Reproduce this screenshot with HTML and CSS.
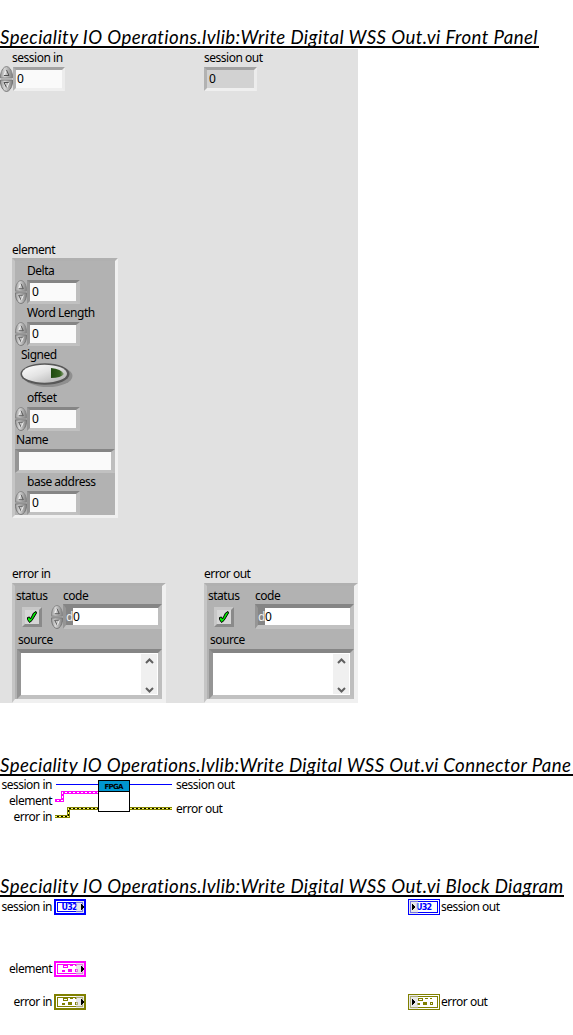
FILE: index.html
```html
<!DOCTYPE html>
<html lang="en">
<head>
<meta charset="utf-8">
<title>Write Digital WSS Out.vi</title>
<link rel="stylesheet" href="styles.css">
</head>
<body>
<svg class="defs" width="0" height="0">
  <defs>
    <linearGradient id="metal" x1="0" x2="1" y1="0" y2="0"><stop offset="0" stop-color="#999"/><stop offset=".35" stop-color="#d6d6d6"/><stop offset="1" stop-color="#808080"/></linearGradient>
    <linearGradient id="pill" x1="0" x2="1" y1="0" y2="1"><stop offset="0" stop-color="#fff"/><stop offset=".45" stop-color="#e4e4e4"/><stop offset="1" stop-color="#aaa"/></linearGradient>
    <linearGradient id="led" x1="0" x2="1" y1="0" y2="0"><stop offset="0" stop-color="#1f4a10"/><stop offset=".7" stop-color="#35611f"/><stop offset="1" stop-color="#91a783"/></linearGradient>
    <symbol id="spinner" viewBox="0 0 13 26">
      <path d="M.5 12V9Q2 1 6.500.5 11 1 12.500 9v3z" fill="url(#metal)" stroke="#858585"/>
      <path d="M.5 14v3Q2 25 6.500 25.500 11 25 12.500 17v-3z" fill="url(#metal)" stroke="#757575"/>
      <path d="M4 9l2.500-5" fill="none" stroke="#f4f4f4"/><path d="M6.500 4L9 9.500H4" fill="none" stroke="#505050"/>
      <path d="M9 16.500H4l2.500 5" fill="none" stroke="#505050"/><path d="M7 21.500l2-5" stroke="#f4f4f4"/>
    </symbol>
    <symbol id="check" viewBox="0 0 14 14">
      <path d="M2.500 7.500l2-.5 1 2L8.500 3 11 1.500 11.500 3 7 10.500 4.500 12.500 2.500 9.500z" fill="#00f000" stroke="#000"/>
    </symbol>
    <symbol id="cluster" viewBox="0 0 18 8">
      <g fill="none" stroke="currentColor"><path d="M2.500 .5h4v2h-4zM9 .5h3M14 .5h2M14.500 4.500h2v2h-2z"/></g>
      <path d="M1 5h3v2H1zM7 4h4v3H7z" fill="currentColor"/>
    </symbol>
  </defs>
</svg>

<h1 class="title title-panel">Speciality IO Operations.lvlib:Write Digital WSS Out.vi Front Panel</h1>
<section class="panel">
  <div class="row row-session">
    <div class="side">
      <div class="label">session in</div>
      <div class="numeric flush"><svg class="spinner"><use href="#spinner"/></svg><div class="field">0</div></div>
    </div>
    <div>
      <div class="label flat">session out</div>
      <div class="field readonly">0</div>
    </div>
  </div>

  <div class="element">
    <div class="caption">element</div>
    <div class="cluster">
      <div class="item"><div class="label">Delta</div><div class="numeric"><svg class="spinner"><use href="#spinner"/></svg><div class="field">0</div></div></div>
      <div class="item"><div class="label">Word Length</div><div class="numeric"><svg class="spinner"><use href="#spinner"/></svg><div class="field">0</div></div></div>
      <div class="item switch-item">
        <div class="label switch-label">Signed</div>
        <svg class="switch" width="54" height="26" viewBox="0 0 54 26">
          <ellipse cx="28" cy="14" rx="24.500" ry="11" fill="#8f8f8f"/>
          <ellipse cx="25" cy="12" rx="24.500" ry="10.800" fill="#585858"/>
          <ellipse cx="24.500" cy="11.700" rx="22.500" ry="9" fill="url(#pill)"/>
          <path d="M31 6q10 1 13 6-3 4-13 4z" fill="url(#led)"/>
        </svg>
      </div>
      <div class="item"><div class="label">offset</div><div class="numeric"><svg class="spinner"><use href="#spinner"/></svg><div class="field">0</div></div></div>
      <div class="item"><div class="label name-label">Name</div><div class="field name-field"></div></div>
      <div class="item"><div class="label">base address</div><div class="numeric"><svg class="spinner"><use href="#spinner"/></svg><div class="field">0</div></div></div>
    </div>
  </div>

  <div class="row row-errors">
    <div class="error">
      <div class="caption">error in</div>
      <div class="cluster error-cluster">
        <div class="error-labels"><span class="status-label">status</span><span>code</span></div>
        <div class="error-values">
          <div class="status"><svg width="14" height="14"><use href="#check"/></svg></div>
          <svg class="spinner"><use href="#spinner"/></svg>
          <div class="field code"><span class="radix">d</span><span>0</span></div>
        </div>
        <div class="source-label">source</div>
        <div class="field source"><div class="scroll">
          <svg width="9" height="6" viewBox="0 0 9 6"><path d="M1 5l3.500-3.500L8 5" class="chevron"/></svg>
          <svg width="9" height="6" viewBox="0 0 9 6"><path d="M1 1l3.500 3.500L8 1" class="chevron"/></svg>
        </div></div>
      </div>
    </div>
    <div class="error">
      <div class="caption">error out</div>
      <div class="cluster error-cluster">
        <div class="error-labels"><span class="status-label">status</span><span>code</span></div>
        <div class="error-values">
          <div class="status"><svg width="14" height="14"><use href="#check"/></svg></div>
          <div class="field code indicator"><span class="radix">d</span><span>0</span></div>
        </div>
        <div class="source-label">source</div>
        <div class="field source"><div class="scroll">
          <svg width="9" height="6" viewBox="0 0 9 6"><path d="M1 5l3.500-3.500L8 5" class="chevron"/></svg>
          <svg width="9" height="6" viewBox="0 0 9 6"><path d="M1 1l3.500 3.500L8 1" class="chevron"/></svg>
        </div></div>
      </div>
    </div>
  </div>
</section>

<h1 class="title title-pane">Speciality IO Operations.lvlib:Write Digital WSS Out.vi Connector Pane</h1>
<section class="pane">
  <div class="pins pins-in"><span>session in</span><span>element</span><span>error in</span></div>
  <svg width="124" height="40" viewBox="52 776 124 40" shape-rendering="crispEdges">
    <path d="M56 784.500h42M130 784.500h42" stroke="#00f" fill="none"/>
    <path d="M55 800.500h7.500v-8H98" stroke="#f0f" stroke-width="3" fill="none"/>
    <path d="M57 800.500h5.500v-8H98" stroke="#fff" stroke-dasharray="2 2" fill="none"/>
    <path d="M55 816.500h13.500v-8H98M130 808.500h42" stroke="#808000" stroke-width="3" fill="none"/>
    <path d="M55 816.500h13.500v-8H98M130 808.500h42" stroke="#000" fill="none"/>
    <path d="M55 816.500h13.500v-8H98M130 808.500h42" stroke="#ff6" stroke-dasharray="2 2" fill="none"/>
    <rect x="98.500" y="780.500" width="31" height="31" fill="#fff" stroke="#000"/>
    <path d="M99 781h30v10H99z" fill="#0096d0"/><path d="M99 791.500h30" stroke="#000"/>
    <text x="104.500" y="788.500" class="fpga" textLength="19">FPGA</text>
  </svg>
  <div class="pins pins-out"><span>session out</span><span>error out</span></div>
</section>

<h1 class="title title-diagram">Speciality IO Operations.lvlib:Write Digital WSS Out.vi Block Diagram</h1>
<section class="diagram">
  <div class="node in r1"><span>session in</span><svg class="terminal blue" viewBox="0 0 32 16"><path d="M1 1h30v14H1z" class="thick"/><path d="M3.500 3.500h25v9h-25z" class="thin"/><text x="7.500" y="11" class="type" textLength="16">U32</text><path d="M22 2h8v12h-8z" class="tint"/><path d="M27 4.500v7l3-3.500z"/></svg></div>
  <div class="node out r1"><svg class="terminal blue" viewBox="0 0 32 16"><path d="M.5 .5h31v15H.5z" class="thin"/><path d="M2.500 2.500h27v11h-27z" class="thin"/><text x="8" y="11" class="type" textLength="16">U32</text><path d="M1 1h9v14H1z" class="tint"/><path d="M4 4.500v7l4-3.500z"/></svg><span>session out</span></div>
  <div class="node in r2"><span>element</span><svg class="terminal pink" viewBox="0 0 32 16"><path d="M1 1h30v14H1z" class="thick"/><path d="M3.500 3.500h25v9h-25z" class="thin"/><use href="#cluster" x="7" y="4" width="18" height="8"/><path d="M22 2h8v12h-8z" class="tint"/><path d="M27 4.500v7l3-3.500z"/></svg></div>
  <div class="node in r3"><span>error in</span><svg class="terminal olive" viewBox="0 0 32 16"><path d="M1 1h30v14H1z" class="thick"/><path d="M3.500 3.500h25v9h-25z" class="thin"/><use href="#cluster" x="7" y="4" width="18" height="8"/><path d="M22 2h8v12h-8z" class="tint"/><path d="M27 4.500v7l3-3.500z"/></svg></div>
  <div class="node out r3"><svg class="terminal olive" viewBox="0 0 32 16"><path d="M.5 .5h31v15H.5z" class="thin"/><path d="M2.500 2.500h27v11h-27z" class="thin"/><use href="#cluster" x="8" y="4" width="18" height="8"/><path d="M1 1h9v14H1z" class="tint"/><path d="M4 4.500v7l4-3.500z"/></svg><span>error out</span></div>
</section>
</body>
</html>
```

FILE: styles.css
```css
* { box-sizing: border-box; }
body {
  margin: 0;
  padding-top: 27px;
  background: #fff;
  color: #000;
  font: 12px/16px "Noto Sans", "Open Sans", sans-serif;
  letter-spacing: -0.48px;
  white-space: nowrap;
}
svg { display: block; flex: none; }
.defs { position: absolute; }
.title {
  margin: 0;
  height: 21px;
  border-bottom: 2px solid #000;
  overflow: hidden;
  font: italic 400 18.67px/21px Lato, sans-serif;
  letter-spacing: 0.41px;
}
.title-panel { width: 539px; }
.title-pane { width: 573px; margin-top: 52px; letter-spacing: 0.37px; }
.title-diagram { width: 564px; margin-top: 60px; }

.panel {
  width: 358px;
  height: 654px;
  margin-top: 1px;
  background: #e1e1e1;
  display: flex;
  flex-direction: column;
}
.row { display: grid; grid-template-columns: 204px 154px; }
.row-session { height: 193px; padding-top: 1px; }
.label { height: 17px; padding-left: 12px; }
.label.flat { padding-left: 0; }
.numeric { display: flex; align-items: center; }
.flush { height: 24px; }
.spinner { width: 13px; height: 26px; }
.field {
  width: 52px;
  height: 24px;
  padding-left: 2px;
  border: solid;
  border-width: 3px;
  border-color: #a2a2a2 #ececec #efefef #b2b2b2;
  background: #fafafa;
  line-height: 17px;
}
.flush .field { padding-left: 1px; }
.readonly { width: 53px; background: #d2d2d2; }

.element { height: 324px; }
.caption { height: 16px; padding-left: 12px; }
.cluster {
  margin-left: 12px;
  border: solid;
  border-width: 3px;
  border-color: #b0b0b0 #f0f0f0 #f0f0f0 #c5c5c5;
  background: #b2b2b2;
}
.element .cluster { width: 106px; height: 260px; padding-top: 1px; border-right-width: 3px; }
.item { height: 42px; }
.item .label { height: 18px; line-height: 18px; }
.item .numeric { height: 24px; }
.item .spinner { width: 12px; }
.cluster .field { border-color: #858585 #bebebe #c1c1c1 #959595; }
.item .numeric .field { width: 53px; border-right-width: 4px; }
.switch-item { height: 43px; }
.item .switch-label { height: 17px; padding-left: 6px; }
.switch { margin: -1px 0 0 5px; }
.item .name-label { padding-left: 1px; }
.item .name-field { width: 100px; border-width: 3px 4px; }

.row-errors { height: 136px; }
.error .caption { padding: 0; margin-left: 12px; height: 17px; }
.error:nth-child(2) .caption, .error:nth-child(2) .cluster { margin-left: 0; }
.error-cluster { width: 154px; height: 120px; border-width: 3px 4px 4px 3px; }
.error-labels { display: flex; height: 18px; padding: 2px 0 0 1px; }
.status-label { width: 47px; }
.error-values { display: flex; align-items: center; height: 25px; }
.status {
  width: 20px;
  height: 20px;
  margin: 0 9px 0 7px;
  border: 3px solid;
  border-color: #c8c8c8 #8a8a8a #8a8a8a #c8c8c8;
  background: #d6d6d6;
}
.error-values .spinner { width: 12px; }
.error .code { display: flex; width: 99px; height: 25px; padding: 0; border-width: 4px 4px 4px 3px; background: #fff; }
.error .indicator { margin-left: 12px; }
.radix { width: 7px; background: #858585; color: #eee; }
.source-label { height: 20px; padding: 3px 0 0 3px; }
.error .source {
  display: flex;
  justify-content: flex-end;
  width: 145px;
  height: 50px;
  margin-left: 2px;
  padding: 1px;
  border-width: 4px;
  background: #fff;
}
.scroll {
  display: flex;
  flex-direction: column;
  align-items: center;
  justify-content: space-between;
  width: 16px;
  padding: 4px 0 1px;
  background: #f0f0f0;
}
.chevron { fill: none; stroke: #606060; stroke-width: 2; }

.pane { display: flex; height: 40px; }
.pins { display: flex; flex-direction: column; padding-top: 1px; height: 52px; }
.pins-in { width: 52px; text-align: right; }
.pins-out { gap: 8px; }
.pane svg { overflow: visible; }
.fpga { font: bold 7px "DejaVu Sans", sans-serif; letter-spacing: 0; }

.diagram {
  display: grid;
  grid-template-columns: 86px auto;
  grid-template-rows: 62px 33px 16px;
  justify-content: start;
  column-gap: 322px;
  padding-top: 2px;
}
.node { display: flex; height: 16px; }
.in { grid-column: 1; justify-content: flex-end; gap: 2px; }
.out { grid-column: 2; gap: 1px; }
.r1 { grid-row: 1; }
.r2 { grid-row: 2; }
.r3 { grid-row: 3; }
.terminal { width: 32px; height: 16px; shape-rendering: crispEdges; }
.blue { color: #00f; }
.pink { color: #f0f; }
.olive { color: #808000; }
.thick, .thin { fill: #fff; stroke: currentColor; }
.thick { stroke-width: 2; }
.tint { fill: #d6d6d6; opacity: 0.55; }
.type { font: bold 8px "DejaVu Sans", sans-serif; fill: currentColor; letter-spacing: 0; }
```
